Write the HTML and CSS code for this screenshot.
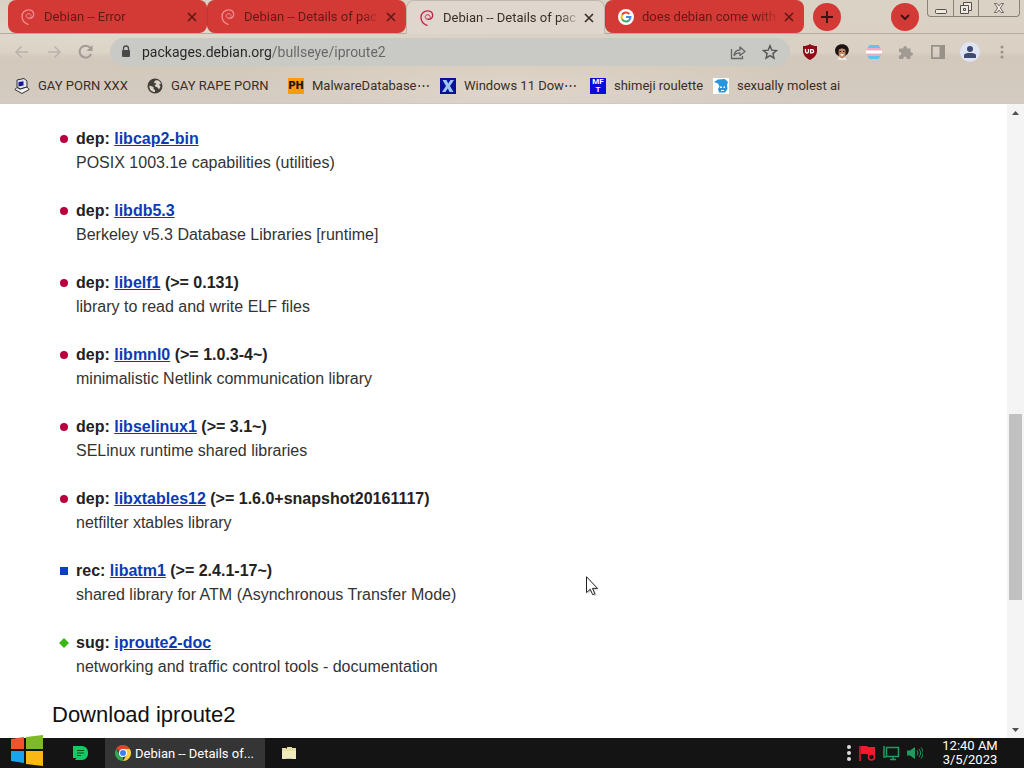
FILE: index.html
```html
<!DOCTYPE html>
<html lang="en">
<head>
    <meta charset="UTF-8">
    <meta name="viewport" content="width=device-width, initial-scale=1.0">
    <title>Debian -- Details of package iproute2 in bullseye</title>
    <link rel="stylesheet" href="styles.css">
</head>
<body>
    <!-- shared icons -->
    <svg class="symbols" width="0" height="0" aria-hidden="true">
        <symbol id="swirl" viewBox="0 0 16 16">
            <path d="M9.200 9.300C7.300 9.500 6 8.300 6.200 6.800 6.500 5.300 7.700 4.600 9 4.700c1.500.2 2.400 1.300 2.200 2.600" fill="none" stroke="currentColor" stroke-width="1" stroke-linecap="round"/>
            <path d="M9.200 9.300c2.600.2 4.600-1.500 4.500-4C13.500 2.500 11.200.900 8.500.900 4.800.900 2 3.600 2 7.300c0 3.600 2.300 6.700 6 8" fill="none" stroke="currentColor" stroke-width="1.400" stroke-linecap="round"/>
        </symbol>
        <symbol id="cross" viewBox="0 0 10 10">
            <path d="M1 1l8 8M9 1L1 9" stroke="currentColor" stroke-width="1.700"/>
        </symbol>
    </svg>

    <header class="browser">
        <div class="tabs">
            <div class="tab">
                <svg class="icon pale"><use href="#swirl"/></svg>
                <a href="#" class="tab-title">Debian -- Error</a>
                <button class="close" aria-label="Close tab"><svg><use href="#cross"/></svg></button>
            </div>
            <div class="tab">
                <svg class="icon pale"><use href="#swirl"/></svg>
                <a href="#" class="tab-title">Debian -- Details of pac</a>
                <button class="close" aria-label="Close tab"><svg><use href="#cross"/></svg></button>
            </div>
            <div class="tab active">
                <svg class="icon"><use href="#swirl"/></svg>
                <a href="#" class="tab-title">Debian -- Details of pac</a>
                <button class="close" aria-label="Close tab"><svg><use href="#cross"/></svg></button>
            </div>
            <div class="tab">
                <svg class="icon" viewBox="0 0 16 16">
                    <circle cx="8" cy="8" r="8" fill="#fff"/>
                    <g fill="none" stroke-width="2">
                        <path d="M11.300 5A4.500 4.500 0 0 0 4.100 5.800" stroke="#ea4335"/>
                        <path d="M4.100 5.800a4.500 4.500 0 0 0 0 4.400" stroke="#fbbc05"/>
                        <path d="M4.100 10.200a4.500 4.500 0 0 0 6.800 1.200" stroke="#34a853"/>
                        <path d="M10.900 11.400A4.500 4.500 0 0 0 12.500 8H8" stroke="#4285f4"/>
                    </g>
                </svg>
                <a href="#" class="tab-title">does debian come with</a>
                <button class="close" aria-label="Close tab"><svg><use href="#cross"/></svg></button>
            </div>
            <button class="round" aria-label="New tab">
                <svg width="14" height="14" viewBox="0 0 14 14"><path d="M7 1v12M1 7h12" stroke="#3c1512" stroke-width="2"/></svg>
            </button>
            <button class="round search-tabs" aria-label="Search tabs">
                <svg width="10" height="8" viewBox="0 0 10 8"><path d="M1 2l4 4 4-4" fill="none" stroke="#3c1512" stroke-width="2"/></svg>
            </button>
            <div class="window-buttons">
                <button aria-label="Minimize"><svg width="14" height="14" viewBox="0 0 14 14"><rect x="1.500" y="8.500" width="11" height="4" rx="1" fill="#eee9e2" stroke="#544e47"/></svg></button>
                <button aria-label="Restore"><svg width="14" height="14" viewBox="0 0 14 14"><g fill="#eee9e2" stroke="#544e47"><path d="M4.500 1.500h8v8h-8z"/><path d="M1.500 4.500h8v8h-8z"/><path d="M4.500 7.500h2v2h-2z"/></g></svg></button>
                <button aria-label="Close"><svg width="12" height="10" viewBox="0 0 14 12"><path d="M1.500.5h3L7 3.500 9.500.5h3L8.700 6l3.800 5.500h-3L7 8.500l-2.500 3h-3L5.300 6z" fill="#eee9e2" stroke="#544e47"/></svg></button>
            </div>
        </div>

        <div class="toolbar">
            <button class="nav" aria-label="Back"><svg width="16" height="16" viewBox="0 0 16 16"><path d="M14 8H2.500M7.500 2.500L2 8l5.500 5.500" fill="none" stroke="#b9b3aa" stroke-width="1.500"/></svg></button>
            <button class="nav" aria-label="Forward"><svg width="16" height="16" viewBox="0 0 16 16"><path d="M2 8h11.500M8.500 2.500L14 8l-5.500 5.500" fill="none" stroke="#b9b3aa" stroke-width="1.500"/></svg></button>
            <button class="nav" aria-label="Reload"><svg width="16" height="16" viewBox="0 0 16 16"><path d="M13.200 10A6 6 0 1 1 12.300 3.800L14 5.500" fill="none" stroke="#a29c94" stroke-width="2"/><path d="M14.500 1v6h-6z" fill="#a29c94"/></svg></button>
            <div class="omnibox">
                <svg width="10" height="14" viewBox="0 0 10 14"><rect x="1" y="5" width="8" height="7" rx="1" fill="#4a4a4a"/><path d="M2.500 5.500V3.500a2.500 2.500 0 0 1 5 0v2" fill="none" stroke="#4a4a4a" stroke-width="1.300"/></svg>
                <input type="text" class="address" aria-label="Address" value="packages.debian.org/bullseye/iproute2">
                <button aria-label="Share"><svg width="16" height="16" viewBox="0 0 16 16"><path d="M1.500 5v9.500H12.500V12" fill="none" stroke="#666" stroke-width="1.300"/><path d="M4 11.500c.5-4 3-5.500 6-5.500V3l5 4.500-5 4V8.800c-2.500 0-4.500.7-6 2.700z" fill="none" stroke="#666" stroke-width="1.300" stroke-linejoin="round"/></svg></button>
                <button aria-label="Bookmark this tab"><svg width="16" height="16" viewBox="0 0 16 16"><path d="M8 1.700l1.800 4.400 4.700.4-3.600 3.100 1.100 4.600L8 11.700l-4 2.500 1.100-4.600L1.500 6.500l4.700-.4z" fill="none" stroke="#555" stroke-width="1.400"/></svg></button>
            </div>
            <div class="extensions">
                <button aria-label="uBlock Origin"><svg width="16" height="16" viewBox="0 0 16 16"><path d="M8 0c2 1.500 4 2 7 2v5c0 4-3 7-7 9-4-2-7-5-7-9V2c3 0 5-.5 7-2z" fill="#8c0d15"/><path d="M3.500 5v2.500a1.500 1.500 0 0 0 3 0V5" fill="none" stroke="#fff" stroke-width="1.300"/><path d="M8.600 5.600h1.400a1.600 1.600 0 0 1 0 3.200H8.600z" fill="none" stroke="#fff" stroke-width="1.300"/></svg></button>
                <button aria-label="Portrait extension"><svg width="16" height="16" viewBox="0 0 16 16"><path d="M3 2C5.500-.3 10.500-.3 13 2c2 2 2.500 5 .5 8L11 12H4.500L2 10C.3 7 1 4 3 2z" fill="#1d1411"/><path d="M4.700 6c1.500-2 5-2 6.800 0v5c-.7 2.500-1.700 3.500-3.300 3.500S5.300 13.500 4.700 11z" fill="#c08a64"/><path d="M3.500 16l1.700-3 3 1.500L11 13l2 3z" fill="#efe8dd"/><path d="M5.800 10.300h4.400L8 12.300z" fill="#fff"/><path d="M5.500 7h1.500v1H5.500zM9 7h1.500v1H9z" fill="#221612"/></svg></button>
                <button aria-label="Flag extension"><svg width="16" height="16" viewBox="0 0 16 16"><path d="M3.500 1h9l2 3h-13zM1.500 12h13l-2 3h-9z" fill="#5fc5ef"/><path d="M1.500 4h13L16 6.500H0zM0 9.500h16L14.500 12h-13z" fill="#efaac3"/><path d="M0 6.500h16v3H0z" fill="#fff"/></svg></button>
                <button aria-label="Extensions"><svg width="16" height="16" viewBox="0 0 16 16"><path d="M1 4.500h4.300V3.700a1.800 1.800 0 0 1 3.600 0v.8h3.600v3.700h.7a1.800 1.800 0 0 1 0 3.600h-.7V15H8.800v-.7a1.700 1.700 0 0 0-3.400 0v.7H1v-3.600h.7a1.700 1.700 0 0 0 0-3.400H1z" fill="#a19a92"/></svg></button>
                <button aria-label="Side panel"><svg width="16" height="16" viewBox="0 0 16 16"><path d="M1.900 1.900h12.200v12.200H1.900z" fill="none" stroke="#97918a" stroke-width="1.800"/><path d="M9.500 2H14v12H9.500z" fill="#97918a"/></svg></button>
                <button class="profile" aria-label="Profile"><svg width="14" height="14" viewBox="0 0 14 14"><circle cx="7" cy="4" r="3" fill="#3f4a70"/><path d="M1 13v-2.500C1 8.500 4 8 7 8s6 .5 6 2.500V13z" fill="#3f4a70"/></svg></button>
                <button aria-label="Menu"><svg width="16" height="16" viewBox="0 0 16 16"><g fill="#98928a"><circle cx="8" cy="3" r="1.500"/><circle cx="8" cy="8" r="1.500"/><circle cx="8" cy="13" r="1.500"/></g></svg></button>
            </div>
        </div>

        <nav class="bookmarks">
            <a href="#">
                <svg class="icon" viewBox="0 0 16 16"><path d="M3 2l7-1.500L13 3v6l-7 2-3-2z" fill="#e5e5ec" stroke="#333"/><path d="M4.500 4l5-.8v4.300l-5 1z" fill="#17179a"/><path d="M.800 11.500L3 9.500l3 1.700 7-2.200 2.200 2.500-7.200 4z" fill="#f0f0f0" stroke="#333"/></svg>
                <span>GAY PORN XXX</span>
            </a>
            <a href="#">
                <svg class="icon" viewBox="0 0 16 16"><circle cx="8" cy="8" r="7.500" fill="#423e3a"/><path d="M2.500 7.500l4 1.500v2l1.500 1v2C4.500 14 2 11.500 2.500 7.500zM8 2.500l3-.2c1.500.7 2.500 2 3 3.500L12 6.500l1.500 2L12 11.500 10.500 9.500 7.500 8l2-2.500L7 5z" fill="#ddd3c6"/></svg>
                <span>GAY RAPE PORN</span>
            </a>
            <a href="#">
                <b class="icon ph">PH</b>
                <span>MalwareDatabase⋯</span>
            </a>
            <a href="#">
                <svg class="icon" viewBox="0 0 16 16"><path d="M0 0h16v16H0z" fill="#0a109a"/><path d="M2.500 2h4L8.200 5.500 10.500 2H14L10 8l3.500 6h-4L7.800 10.500 5.500 14H2l4-6z" fill="#9cc5f4"/></svg>
                <span>Windows 11 Dow⋯</span>
            </a>
            <a href="#">
                <b class="icon mft">MF<br>T</b>
                <span>shimeji roulette</span>
            </a>
            <a href="#">
                <svg class="icon" viewBox="0 0 16 16"><path d="M0 0h16v16H0z" fill="#fff"/><path d="M1 4l4-2.500 7-.5 3 3-1 3 .5 4-2.500 3.500H6L5 11l1.500-2.500L5 5.500z" fill="#2896dc"/><path d="M7 8.500h2V10H7zM10.500 8.500H12V10h-1.500zM8 12h3v1H8z" fill="#fff"/></svg>
                <span>sexually molest ai</span>
            </a>
        </nav>
    </header>

    <div class="viewport">
        <main class="page">
            <ul class="deps">
                <li class="dep">
                    <h3>dep: <a href="#">libcap2-bin</a></h3>
                    <p>POSIX 1003.1e capabilities (utilities)</p>
                </li>
                <li class="dep">
                    <h3>dep: <a href="#">libdb5.3</a></h3>
                    <p>Berkeley v5.3 Database Libraries [runtime]</p>
                </li>
                <li class="dep">
                    <h3>dep: <a href="#">libelf1</a> (&gt;= 0.131)</h3>
                    <p>library to read and write ELF files</p>
                </li>
                <li class="dep">
                    <h3>dep: <a href="#">libmnl0</a> (&gt;= 1.0.3-4~)</h3>
                    <p>minimalistic Netlink communication library</p>
                </li>
                <li class="dep">
                    <h3>dep: <a href="#">libselinux1</a> (&gt;= 3.1~)</h3>
                    <p>SELinux runtime shared libraries</p>
                </li>
                <li class="dep">
                    <h3>dep: <a href="#">libxtables12</a> (&gt;= 1.6.0+snapshot20161117)</h3>
                    <p>netfilter xtables library</p>
                </li>
                <li class="rec">
                    <h3>rec: <a href="#">libatm1</a> (&gt;= 2.4.1-17~)</h3>
                    <p>shared library for ATM (Asynchronous Transfer Mode)</p>
                </li>
                <li class="sug">
                    <h3>sug: <a href="#">iproute2-doc</a></h3>
                    <p>networking and traffic control tools - documentation</p>
                </li>
            </ul>
            <h2>Download iproute2</h2>
        </main>
        <div class="scrollbar">
            <button aria-label="Scroll up"><svg width="7" height="4" viewBox="0 0 7 4"><path d="M0 4l3.500-4L7 4z" fill="#505050"/></svg></button>
            <div class="track"><div class="thumb"></div></div>
            <button aria-label="Scroll down"><svg width="7" height="4" viewBox="0 0 7 4"><path d="M0 0l3.500 4L7 0z" fill="#505050"/></svg></button>
        </div>
        <svg class="cursor" width="14" height="21" viewBox="0 0 14 21"><path d="M1.500 2.500l11 11h-4.500l2.500 5.500-2.300 1-2.500-5.600-3.200 3z" fill="#999" opacity=".5"/><path d="M.5.700v16l3.700-3.500 2.500 5.500 2.200-1-2.400-5.300h5z" fill="#fff" stroke="#222"/></svg>
    </div>

    <footer class="taskbar">
        <button class="start" aria-label="Start">
            <svg width="32" height="32" viewBox="0 0 32 32"><path d="M0 4l13-2v12H0z" fill="#f0532d"/><path d="M15 2l17-2v14H15z" fill="#7db928"/><path d="M0 16h13v12L0 26z" fill="#18a4ec"/><path d="M15 16h17v15l-17-2z" fill="#fbb813"/></svg>
        </button>
        <button class="pinned" aria-label="Notes">
            <svg width="15" height="14" viewBox="0 0 15 14"><path d="M0 0h9a6 6 0 0 1 6 6v2a6 6 0 0 1-6 6H2l1.500-2H0z" fill="#12cb62"/><path d="M4 4.500h7M4 7h7M4 9.500h4" stroke="#0b4a28" stroke-width="1.200"/></svg>
        </button>
        <button class="task">
            <svg width="16" height="16" viewBox="0 0 16 16"><path d="M8 8L1.070 4A8 8 0 0 1 14.930 4z" fill="#e5412f"/><path d="M8 8h0L8 16A8 8 0 0 1 1.070 4L5 10z" fill="#31a552"/><path d="M8 4h6.930A8 8 0 0 1 8 16l3.500-6z" fill="#fcd03f"/><circle cx="8" cy="8" r="4" fill="#fff"/><circle cx="8" cy="8" r="3" fill="#3f80ee"/></svg>
            <span>Debian -- Details of...</span>
        </button>
        <button class="folder" aria-label="Files">
            <svg width="14" height="14" viewBox="0 0 14 14"><path d="M0 2h4l1 1V1h5v1h4v11H0z" fill="#e6e0a4"/><path d="M0 5h14v8H0z" fill="#f2ecbd"/><path d="M4 12h6v1H4z" fill="#b9c9b6"/></svg>
        </button>
        <div class="tray">
            <svg width="6" height="18" viewBox="0 0 6 18"><g fill="#ddd"><circle cx="3" cy="3" r="2"/><circle cx="3" cy="9" r="2"/><circle cx="3" cy="15" r="2"/></g></svg>
            <svg width="17" height="18" viewBox="0 0 17 18"><path d="M1 2v15" stroke="#ee1c2c" stroke-width="1.500"/><path d="M2 2h6l1 1h7v8H9l-1-1H2z" fill="#ee1c2c"/><circle cx="12.500" cy="13" r="3" fill="#141414" stroke="#ee1c2c" stroke-width="1.500"/></svg>
            <svg width="17" height="16" viewBox="0 0 17 16"><path d="M3.500 2.500h12v9h-12zM7 14.500h6M10 12v2M1 1v11h2" fill="none" stroke="#1d9c60" stroke-width="1.500"/></svg>
            <svg width="16" height="14" viewBox="0 0 16 14"><path d="M0 4.500h3L8 1v12L3 9.500H0z" fill="#1d9c60"/><path d="M10 4.500a4 4 0 0 1 0 5M12 3a6 6 0 0 1 0 8M14 1.500a8 8 0 0 1 0 11" fill="none" stroke="#1d9c60"/></svg>
        </div>
        <div class="clock">
            <div>12:40 AM</div>
            <div>3/5/2023</div>
        </div>
    </footer>
</body>
</html>
```
FILE: styles.css
```css
* {
    box-sizing: border-box;
}

body {
    margin: 0;
    height: 100vh;
    display: flex;
    flex-direction: column;
    overflow: hidden;
    font-family: Roboto, "Liberation Sans", sans-serif;
    font-size: 13px;
    color: #3a2e26;
    background: #fff;
}

button {
    display: flex;
    align-items: center;
    justify-content: center;
    padding: 0;
    border: none;
    background: none;
    font: inherit;
    color: inherit;
    flex-shrink: 0;
}

a {
    color: inherit;
    text-decoration: none;
}

svg {
    display: block;
    flex-shrink: 0;
}

.symbols {
    position: absolute;
}

.icon {
    width: 16px;
    height: 16px;
    flex-shrink: 0;
}

/* browser chrome */
.browser {
    flex-shrink: 0;
    background:
        radial-gradient(ellipse at 50% 85%, rgba(226, 215, 203, 0.8), transparent 40%),
        radial-gradient(ellipse at 12% 30%, rgba(226, 219, 207, 0.8), transparent 30%),
        linear-gradient(#dad2c5, #dad1c4 50%, #d2c8bb 54%, #d4cbc1);
}

.tabs {
    display: flex;
    height: 34px;
    padding-left: 8px;
    border-bottom: 1px solid #b5aaa0;
}

.tab {
    display: flex;
    align-items: center;
    width: 199px;
    height: 33px;
    padding: 0 10px 0 12px;
    border-radius: 8px;
    background: #d43a35;
    color: #5e1b17;
}

.tab + .tab {
    border-left: 1px solid #a8403a;
}

.tab.active {
    height: 34px;
    border: 1px solid #c0b8ae;
    border-bottom: none;
    border-radius: 8px 8px 0 0;
    background: #dfd7cd;
    color: #3a2e26;
}

.tab .icon {
    color: #c2264c;
}

.tab .pale {
    color: #f08a90;
}

.tab-title {
    flex: 1;
    margin: 0 4px 0 8px;
    overflow: hidden;
    white-space: nowrap;
    -webkit-mask-image: linear-gradient(to right, #000 85%, transparent);
    mask-image: linear-gradient(to right, #000 85%, transparent);
}

.close {
    width: 10px;
    height: 16px;
}

.close svg {
    width: 10px;
    height: 10px;
}

.round {
    width: 28px;
    height: 28px;
    margin: 3px 0 0 9px;
    border-radius: 50%;
    background: #d43a35;
}

.search-tabs {
    margin-left: auto;
}

.window-buttons {
    display: flex;
    height: 17px;
    margin: 0 4px 0 8px;
    border: 1px solid #8b8278;
    border-top: none;
    border-radius: 0 0 4px 4px;
}

.window-buttons button {
    width: 25px;
}

.window-buttons button + button {
    border-left: 1px solid #8b8278;
}

.window-buttons button:last-child {
    width: 41px;
}

.toolbar {
    display: flex;
    align-items: center;
    height: 36px;
    padding: 0 14px;
}

.nav {
    width: 16px;
    margin-right: 16px;
}

.omnibox {
    display: flex;
    align-items: center;
    flex: 1;
    height: 28px;
    padding: 0 12px 0 11px;
    border-radius: 14px;
    background: #c9c9c5;
}

.address {
    flex: 1;
    min-width: 0;
    margin-left: 11px;
    padding: 0;
    border: none;
    outline: none;
    font: 14px Roboto, "Liberation Sans", sans-serif;
    color: transparent;
    /* host is darker than the path */
    background: linear-gradient(to right, #262626 130px, #666 130px);
    -webkit-background-clip: text;
    background-clip: text;
}

.omnibox button {
    margin-left: 16px;
}

.extensions {
    display: flex;
    align-items: center;
    gap: 16px;
    margin-left: 12px;
}

.extensions button {
    width: 16px;
    height: 20px;
}

.extensions .profile {
    width: 20px;
    margin: 0 -2px;
    border-radius: 50%;
    background: #dfe3f2;
}

.bookmarks {
    display: grid;
    grid-template-columns: 133px 141px 152px 150px 123px auto;
    align-items: center;
    height: 34px;
    padding: 0 14px 2px;
    border-bottom: 1px solid #cfc9c2;
}

.bookmarks a {
    display: flex;
    align-items: center;
    gap: 8px;
    white-space: nowrap;
}

.ph {
    background: #fb9a0a;
    color: #1a1209;
    font-size: 11px;
    font-weight: 900;
    line-height: 16px;
    text-align: center;
}

.mft {
    background: #0b0bdc;
    color: #fff;
    font-size: 8px;
    line-height: 8px;
    text-align: center;
}

/* debian package page */
.viewport {
    position: relative;
    display: flex;
    flex: 1;
    min-height: 0;
    font-family: "Liberation Sans", Arial, sans-serif;
}

.page {
    flex: 1;
    overflow: hidden;
    padding: 23px 52px 0;
    font-size: 16px;
    line-height: 24px;
    color: #333;
}

.deps {
    margin: 0;
    padding: 0 0 0 24px;
    list-style: none;
}

.deps li {
    position: relative;
    margin-bottom: 24px;
}

.deps li::before {
    content: "";
    position: absolute;
    left: -16px;
    top: 8px;
    width: 8px;
    height: 8px;
}

.deps .dep::before {
    border-radius: 50%;
    background: #b8003f;
}

.deps .rec::before {
    background: #0a3fbf;
}

.deps .sug::before {
    left: -17px;
    top: 7px;
    width: 10px;
    height: 10px;
    background: #3fb618;
    clip-path: polygon(50% 0, 100% 50%, 50% 100%, 0 50%);
}

.deps h3 {
    margin: 0;
    font-size: 16px;
    color: #222;
}

.deps h3 a {
    color: #0a3bb5;
    text-decoration: underline;
}

.deps p {
    margin: 0;
}

.page h2 {
    margin: 0;
    font-size: 22px;
    font-weight: normal;
    color: #111;
}

.scrollbar {
    display: flex;
    flex-direction: column;
    width: 17px;
    background: #f4f4f4;
}

.scrollbar button {
    height: 17px;
}

.track {
    flex: 1;
    padding: 0 2px;
}

.thumb {
    height: 31%;
    margin-top: 293px;
    background: #c1c1c1;
}

.cursor {
    position: absolute;
    left: 586px;
    top: 472px;
}

/* windows taskbar */
.taskbar {
    position: relative;
    display: flex;
    align-items: center;
    flex-shrink: 0;
    height: 30px;
    background: #141414;
    color: #fff;
}

.start {
    width: 32px;
    height: 32px;
    margin: -4px 0 0 11px;
}

.pinned {
    margin-left: 30px;
}

.task {
    justify-content: flex-start;
    gap: 4px;
    width: 160px;
    height: 30px;
    margin-left: 17px;
    padding-left: 10px;
    background: #353535;
}

.folder {
    margin-left: 17px;
}

.tray {
    display: flex;
    align-items: center;
    gap: 7px;
    margin-left: auto;
}

.clock {
    width: 66px;
    margin: 0 21px 0 14px;
    line-height: 14px;
    text-align: center;
    white-space: nowrap;
}
```
